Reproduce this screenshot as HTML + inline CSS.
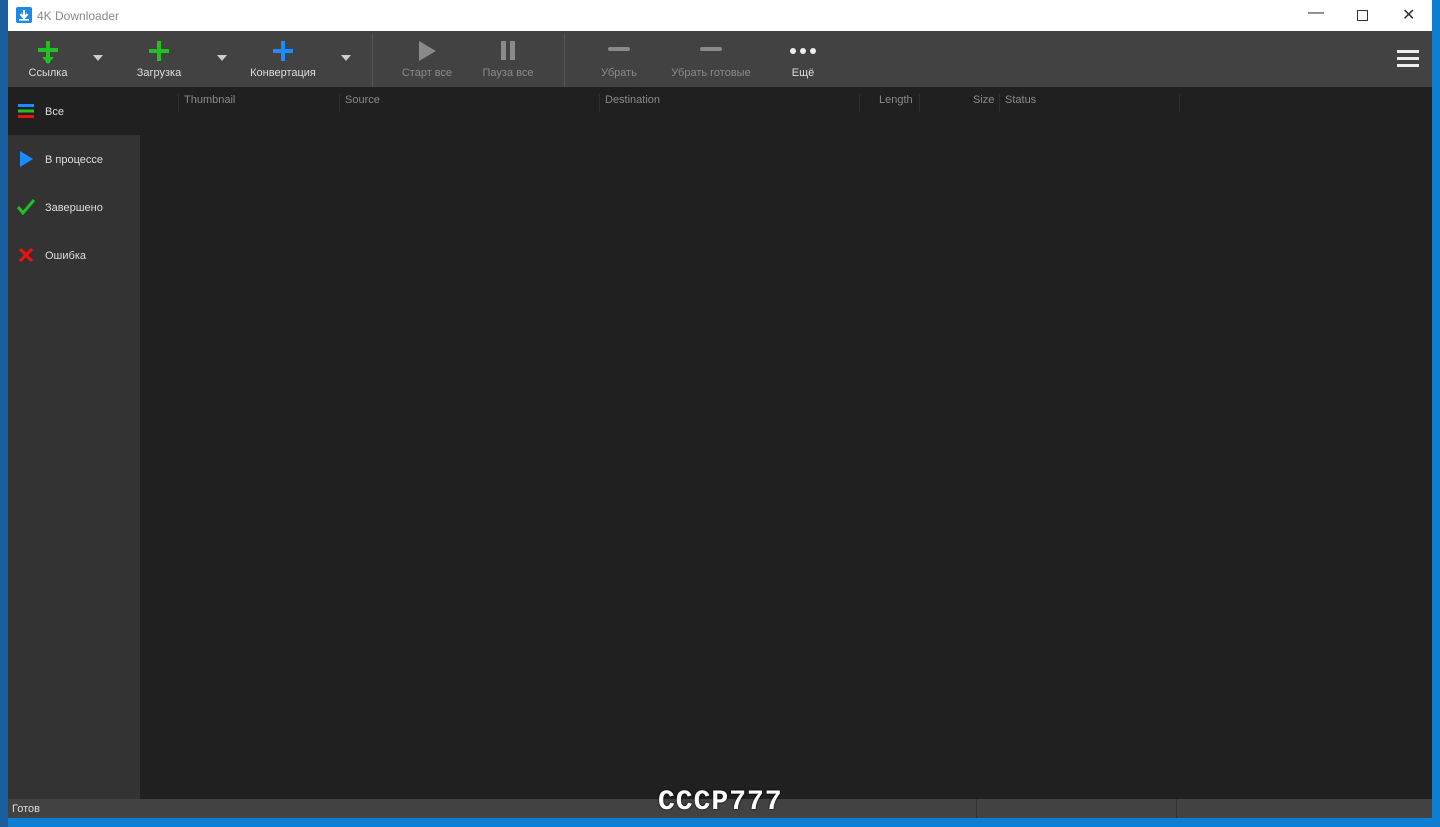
<!DOCTYPE html><html><head><style>
body{margin:0;width:1440px;height:827px;background:#0a7fd4;position:relative;overflow:hidden;font-family:"Liberation Sans",sans-serif;font-size:11px}
#win{position:absolute;left:8px;top:0;width:1424px;height:818px;background:#202020}
#title{position:absolute;left:0;top:0;width:100%;height:31px;background:#fff;color:#888;font-size:12px}
#tb{position:absolute;top:31px;left:0;width:100%;height:56px;background:#424242}
.btn{position:absolute;top:0;text-align:center;color:#ddd;width:90px}
.btn .l{position:absolute;top:36px;width:100%}
.dis{color:#8a8a8a}
.arrow{position:absolute;top:24px;width:0;height:0;border-left:5px solid transparent;border-right:5px solid transparent;border-top:6px solid #ccc}
.sep{position:absolute;top:2px;width:1px;height:54px;background:#555}
#side{position:absolute;top:87px;left:0;width:132px;height:712px;background:#333}
.it{position:absolute;left:0;width:132px;height:48px;color:#ddd}
.it span{position:absolute;left:37px;top:19px}
#hdr{position:absolute;top:87px;left:132px;right:0;height:24px;color:#8a8a8a}
#hdr div{position:absolute;top:7px}
.cs{position:absolute;top:3px;width:1px;height:18px;background:#2e2e2e}
#status{position:absolute;left:0;top:799px;width:100%;height:19px;background:#424242;color:#ddd}
</style></head><body>
<div style="position:absolute;left:0;top:0;width:8px;height:827px;background:#1a5ea0"></div>
<div id="win">
<div id="title">
<svg style="position:absolute;left:8px;top:7px" width="16" height="16"><rect width="16" height="16" rx="2" fill="#1e88e5"/><path d="M8 3v7M4.5 7l3.5 4 3.5-4" stroke="#fff" stroke-width="2.2" fill="none"/><rect x="3" y="12" width="10" height="1.6" fill="#fff"/></svg>
<span style="position:absolute;left:29px;top:9px">4K Downloader</span>
<span style="position:absolute;left:1300px;top:4px;font-size:16px;color:#333">&#8212;</span>
<div style="position:absolute;left:1349px;top:10px;width:9px;height:9px;border:1px solid #333"></div>
<span style="position:absolute;left:1394px;top:5px;font-size:16px;color:#333">&#10005;</span>
</div>
<div id="tb">
<div class="btn" style="left:-5px"><svg style="margin-top:8px" width="24" height="26"><path d="M12 2v22M2 11h20" stroke="#22c022" stroke-width="4"/><path d="M6 18l6 7 6-7z" fill="#22c022"/></svg><div class="l">Ссылка</div></div>
<div class="arrow" style="left:85px"></div>
<div class="btn" style="left:106px"><svg style="margin-top:8px" width="24" height="24"><path d="M12 2v20M2 12h20" stroke="#22c022" stroke-width="4"/></svg><div class="l">Загрузка</div></div>
<div class="arrow" style="left:209px"></div>
<div class="btn" style="left:230px"><svg style="margin-top:8px" width="24" height="24"><path d="M12 2v20M2 12h20" stroke="#1a8cff" stroke-width="4"/></svg><div class="l">Конвертация</div></div>
<div class="arrow" style="left:333px"></div>
<div class="sep" style="left:364px"></div>
<div class="btn dis" style="left:374px"><svg style="margin-top:9px" width="20" height="22"><path d="M2 1l17 10-17 10z" fill="#8a8a8a"/></svg><div class="l">Старт все</div></div>
<div class="btn dis" style="left:455px"><svg style="margin-top:10px" width="20" height="20"><rect x="3" y="0" width="5" height="19" fill="#8a8a8a"/><rect x="12" y="0" width="5" height="19" fill="#8a8a8a"/></svg><div class="l">Пауза все</div></div>
<div class="sep" style="left:556px"></div>
<div class="btn dis" style="left:566px"><svg style="margin-top:16px" width="22" height="6"><rect width="22" height="4" rx="2" fill="#8a8a8a"/></svg><div class="l">Убрать</div></div>
<div class="btn dis" style="left:658px"><svg style="margin-top:16px" width="22" height="6"><rect width="22" height="4" rx="2" fill="#8a8a8a"/></svg><div class="l">Убрать готовые</div></div>
<div class="btn" style="left:750px"><svg style="margin-top:16px" width="26" height="8"><circle cx="3" cy="4" r="3" fill="#eee"/><circle cx="13" cy="4" r="3" fill="#eee"/><circle cx="23" cy="4" r="3" fill="#eee"/></svg><div class="l">Ещё</div></div>
<svg style="position:absolute;left:1389px;top:19px" width="22" height="18"><rect y="0" width="22" height="3" fill="#eee"/><rect y="7" width="22" height="3" fill="#eee"/><rect y="14" width="22" height="3" fill="#eee"/></svg>
</div>
<div id="side">
<div class="it" style="top:0;background:#202020"><svg style="position:absolute;left:10px;top:16px" width="16" height="16"><rect y="1" width="16" height="3" fill="#1a8cff"/><rect y="6.5" width="16" height="3" fill="#22c022"/><rect y="12" width="16" height="3" fill="#f01010"/></svg><span>Все</span></div>
<div class="it" style="top:48px"><svg style="position:absolute;left:12px;top:16px" width="14" height="16"><path d="M0 0l13 8-13 8z" fill="#1a8cff"/></svg><span>В процессе</span></div>
<div class="it" style="top:96px"><svg style="position:absolute;left:9px;top:16px" width="18" height="16"><path d="M1 8l5 6L17 1" stroke="#22c022" stroke-width="3" fill="none"/></svg><span>Завершено</span></div>
<div class="it" style="top:144px"><svg style="position:absolute;left:11px;top:17px" width="14" height="14"><path d="M1 1l12 12M13 1L1 13" stroke="#f01010" stroke-width="3"/></svg><span>Ошибка</span></div>
</div>
<div id="hdr">
<div class="cs" style="left:38px"></div><div style="left:44px">Thumbnail</div>
<div class="cs" style="left:199px"></div><div style="left:205px">Source</div>
<div class="cs" style="left:459px"></div><div style="left:465px">Destination</div>
<div class="cs" style="left:719px"></div><div style="left:739px">Length</div>
<div class="cs" style="left:779px"></div><div style="left:833px">Size</div>
<div class="cs" style="left:859px"></div><div style="left:865px">Status</div>
<div class="cs" style="left:1039px"></div>
</div>
<div id="status"><span style="position:absolute;left:4px;top:4px">Готов</span>
<div style="position:absolute;left:968px;top:0;width:1px;height:19px;background:#333"></div>
<div style="position:absolute;left:1168px;top:0;width:1px;height:19px;background:#333"></div>
<span style="position:absolute;left:650px;top:-12px;font-family:'Liberation Mono',monospace;font-size:28px;color:#fff;font-weight:bold;letter-spacing:1px;text-shadow:0 0 2px #000">CCCP777</span></div>
</div>
</body></html>
